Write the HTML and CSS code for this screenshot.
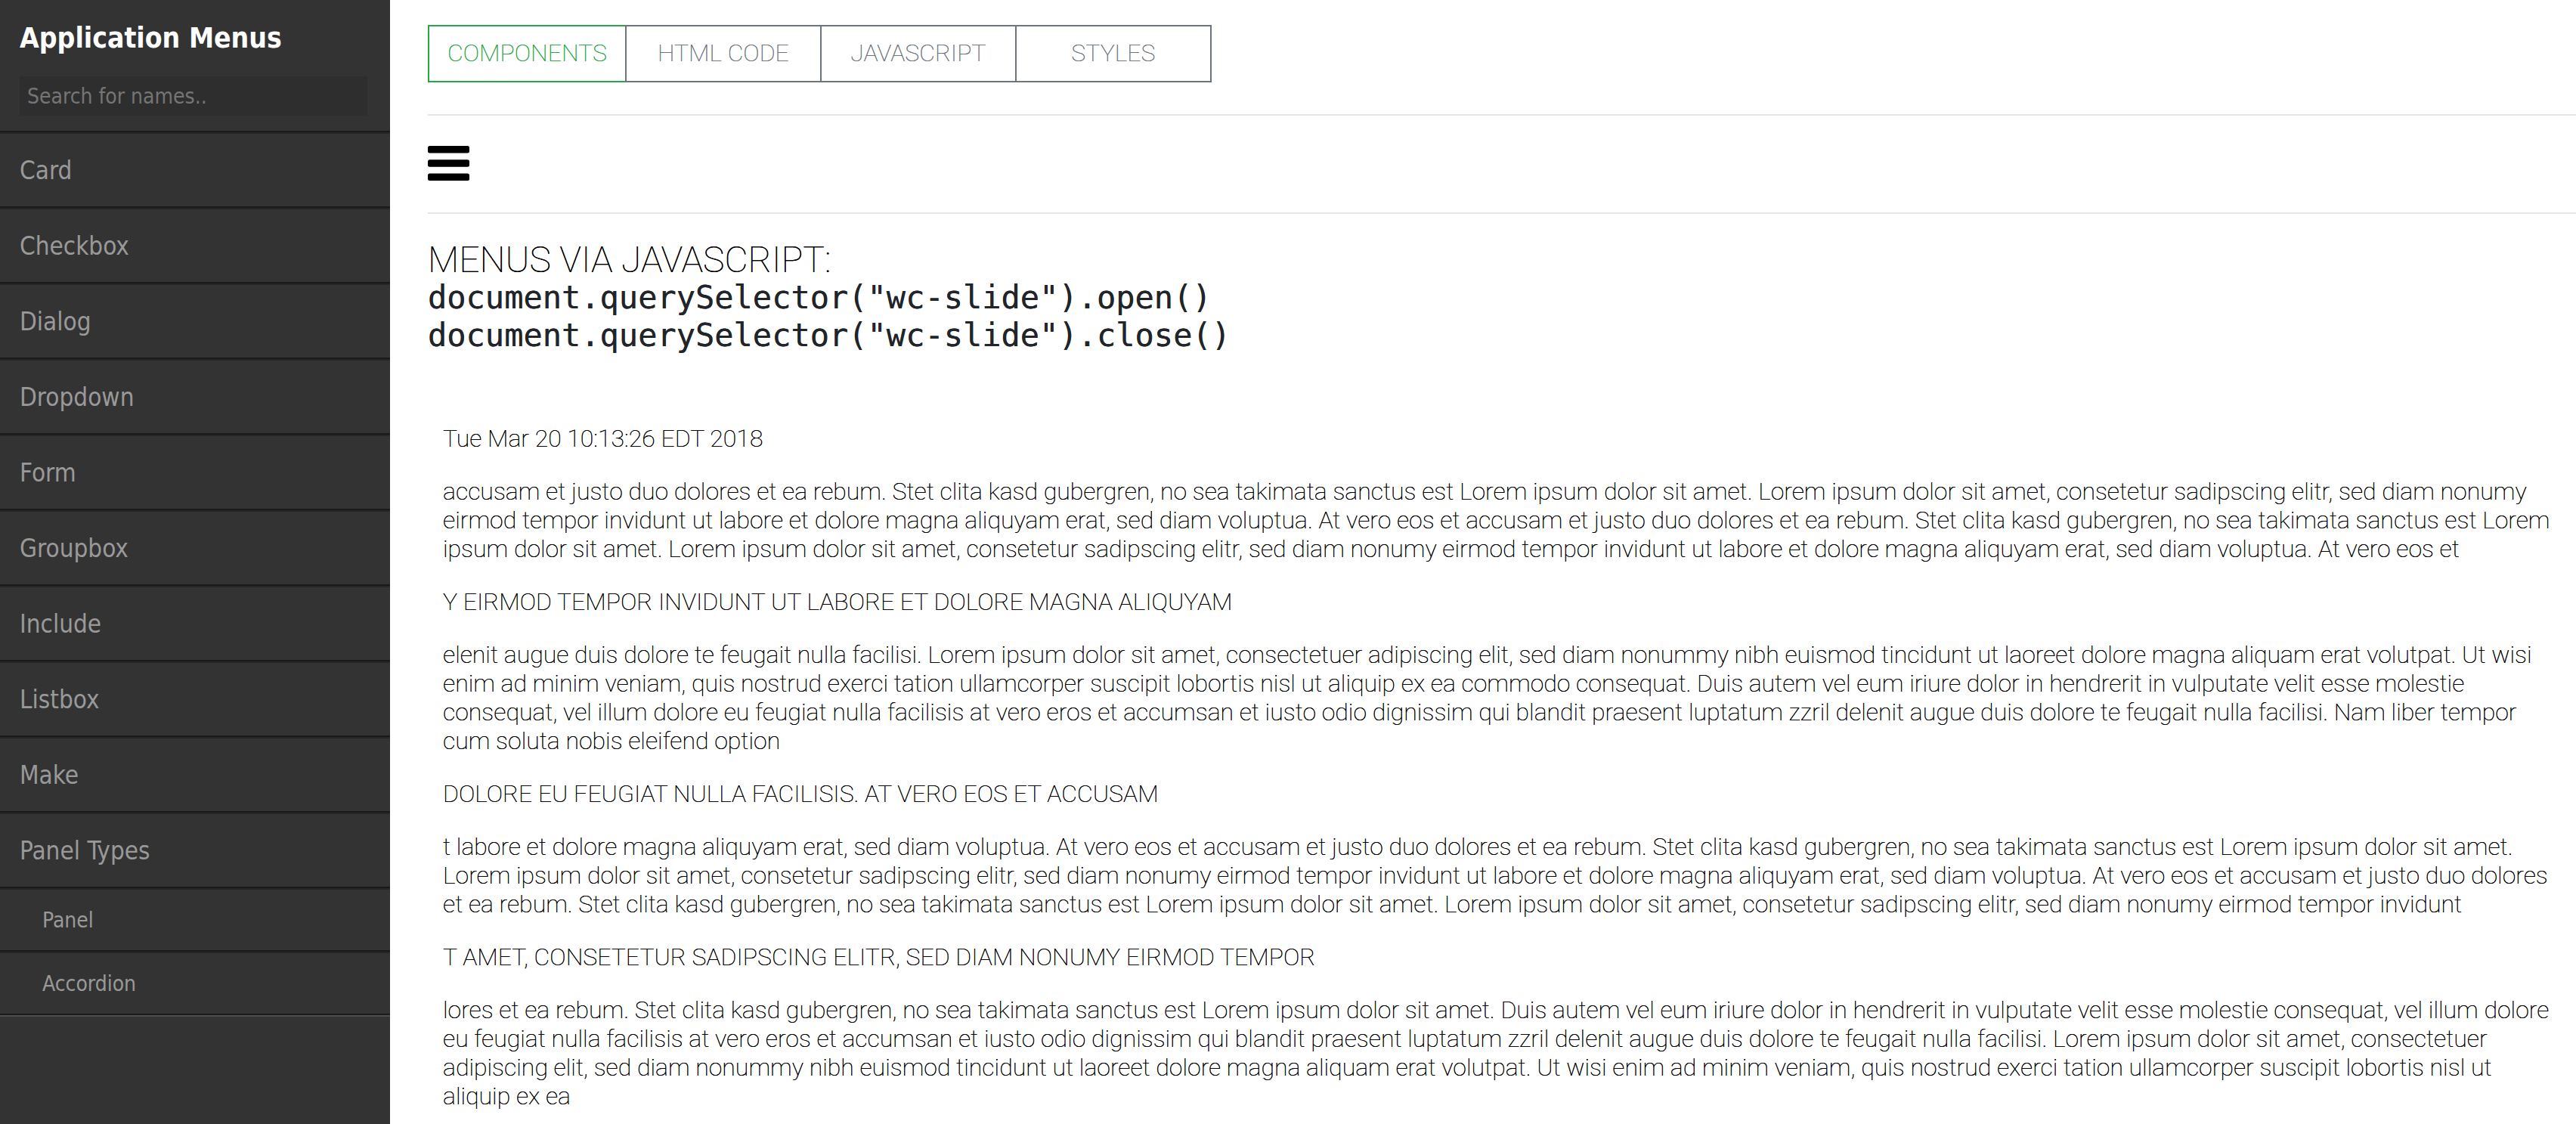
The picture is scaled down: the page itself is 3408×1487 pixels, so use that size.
FILE: index.html
```html
<!DOCTYPE html>
<html lang="en">
<head>
<meta charset="utf-8">
<meta name="viewport" content="width=device-width, initial-scale=1">
<title>Application Menus</title>
<link rel="stylesheet" href="styles.css">
</head>
<body>
<div class="app">
  <aside class="sidebar">
    <header class="sidebar-header">
      <h1 class="sidebar-title">Application Menus</h1>
      <input class="search" type="text" placeholder="Search for names.." aria-label="Search for names">
    </header>
    <nav>
      <ul class="menu">
        <li><a class="menu-link" href="#card">Card</a></li>
        <li><a class="menu-link" href="#checkbox">Checkbox</a></li>
        <li><a class="menu-link" href="#dialog">Dialog</a></li>
        <li><a class="menu-link" href="#dropdown">Dropdown</a></li>
        <li><a class="menu-link" href="#form">Form</a></li>
        <li><a class="menu-link" href="#groupbox">Groupbox</a></li>
        <li><a class="menu-link" href="#include">Include</a></li>
        <li><a class="menu-link" href="#listbox">Listbox</a></li>
        <li><a class="menu-link" href="#make">Make</a></li>
        <li>
          <a class="menu-link" href="#panel-types">Panel Types</a>
          <ul class="submenu">
            <li><a class="menu-link submenu-link" href="#panel">Panel</a></li>
            <li><a class="menu-link submenu-link" href="#accordion">Accordion</a></li>
          </ul>
        </li>
      </ul>
    </nav>
  </aside>

  <main class="content">
    <div class="tabs">
      <button class="tab tab-active" type="button">COMPONENTS</button>
      <button class="tab" type="button">HTML CODE</button>
      <button class="tab" type="button">JAVASCRIPT</button>
      <button class="tab" type="button">STYLES</button>
    </div>

    <div class="toolbar">
      <button class="menu-toggle" type="button" aria-label="Open menu">
        <svg class="menu-icon" viewBox="0 0 55 46" aria-hidden="true">
          <rect x="0" y="0" width="55" height="9.6" rx="2.5"/>
          <rect x="0" y="18.2" width="55" height="9.6" rx="2.5"/>
          <rect x="0" y="36.4" width="55" height="9.6" rx="2.5"/>
        </svg>
      </button>
    </div>

    <h2 class="heading">MENUS VIA JAVASCRIPT:
      <code>document.querySelector("wc-slide").open()</code>
      <code>document.querySelector("wc-slide").close()</code>
    </h2>

    <article class="article">
      <p>Tue Mar 20 10:13:26 EDT 2018</p>
      <p>accusam et justo duo dolores et ea rebum. Stet clita kasd gubergren, no sea takimata sanctus est Lorem ipsum dolor sit amet. Lorem ipsum dolor sit amet, consetetur sadipscing elitr, sed diam nonumy eirmod tempor invidunt ut labore et dolore magna aliquyam erat, sed diam voluptua. At vero eos et accusam et justo duo dolores et ea rebum. Stet clita kasd gubergren, no sea takimata sanctus est Lorem ipsum dolor sit amet. Lorem ipsum dolor sit amet, consetetur sadipscing elitr, sed diam nonumy eirmod tempor invidunt ut labore et dolore magna aliquyam erat, sed diam voluptua. At vero eos et</p>
      <p>Y EIRMOD TEMPOR INVIDUNT UT LABORE ET DOLORE MAGNA ALIQUYAM</p>
      <p>elenit augue duis dolore te feugait nulla facilisi. Lorem ipsum dolor sit amet, consectetuer adipiscing elit, sed diam nonummy nibh euismod tincidunt ut laoreet dolore magna aliquam erat volutpat. Ut wisi enim ad minim veniam, quis nostrud exerci tation ullamcorper suscipit lobortis nisl ut aliquip ex ea commodo consequat. Duis autem vel eum iriure dolor in hendrerit in vulputate velit esse molestie consequat, vel illum dolore eu feugiat nulla facilisis at vero eros et accumsan et iusto odio dignissim qui blandit praesent luptatum zzril delenit augue duis dolore te feugait nulla facilisi. Nam liber tempor cum soluta nobis eleifend option</p>
      <p>DOLORE EU FEUGIAT NULLA FACILISIS. AT VERO EOS ET ACCUSAM</p>
      <p>t labore et dolore magna aliquyam erat, sed diam voluptua. At vero eos et accusam et justo duo dolores et ea rebum. Stet clita kasd gubergren, no sea takimata sanctus est Lorem ipsum dolor sit amet. Lorem ipsum dolor sit amet, consetetur sadipscing elitr, sed diam nonumy eirmod tempor invidunt ut labore et dolore magna aliquyam erat, sed diam voluptua. At vero eos et accusam et justo duo dolores et ea rebum. Stet clita kasd gubergren, no sea takimata sanctus est Lorem ipsum dolor sit amet. Lorem ipsum dolor sit amet, consetetur sadipscing elitr, sed diam nonumy eirmod tempor invidunt</p>
      <p>T AMET, CONSETETUR SADIPSCING ELITR, SED DIAM NONUMY EIRMOD TEMPOR</p>
      <p>lores et ea rebum. Stet clita kasd gubergren, no sea takimata sanctus est Lorem ipsum dolor sit amet. Duis autem vel eum iriure dolor in hendrerit in vulputate velit esse molestie consequat, vel illum dolore eu feugiat nulla facilisis at vero eros et accumsan et iusto odio dignissim qui blandit praesent luptatum zzril delenit augue duis dolore te feugait nulla facilisi. Lorem ipsum dolor sit amet, consectetuer adipiscing elit, sed diam nonummy nibh euismod tincidunt ut laoreet dolore magna aliquam erat volutpat. Ut wisi enim ad minim veniam, quis nostrud exerci tation ullamcorper suscipit lobortis nisl ut aliquip ex ea</p>
    </article>
  </main>
</div>
</body>
</html>
```
FILE: styles.css
```css
* {
  box-sizing: border-box;
}

body {
  margin: 0;
  background: #fff;
  color: #000;
  font-family: Roboto, sans-serif;
  font-size: 32px;
  font-weight: 100;
  line-height: 38px;
}

.app {
  display: flex;
  min-height: 100vh;
}

/* Sidebar */

.sidebar {
  flex: 0 0 516px;
  background: #333;
  color: #999;
  font-family: "DejaVu Sans Condensed", "DejaVu Sans", sans-serif;
  font-weight: 400;
}

.sidebar-header {
  display: flex;
  flex-direction: column;
  gap: 24px;
  padding: 24px 30px 20px 26px;
  border-bottom: 2px solid #1a1a1a;
}

.sidebar-title {
  margin: 0;
  color: #fff;
  font-size: 37px;
  font-weight: 700;
  line-height: 53px;
}

.search {
  width: 100%;
  height: 52px;
  padding: 0 10px;
  border: 0;
  background: #2e2e2e;
  color: #999;
  font-family: inherit;
  font-size: 28px;
}

.search::placeholder {
  color: #757575;
}

.menu,
.submenu {
  margin: 0;
  padding: 0;
  list-style: none;
}

.menu {
  border-bottom: 2px solid #4d4d4d;
}

.menu-link {
  display: block;
  padding: 2px 26px 0;
  border-top: 2px solid #262626;
  border-bottom: 2px solid #1a1a1a;
  color: #999;
  font-size: 33px;
  line-height: 94px;
  text-decoration: none;
}

.submenu-link {
  padding-left: 56px;
  font-size: 28px;
  line-height: 78px;
}

/* Content */

.content {
  flex: 1;
  min-width: 0;
  padding: 33px 0 0 50px;
}

.tabs {
  display: flex;
  padding-bottom: 42px;
  border-bottom: 2px solid #e6e6e6;
}

.tab {
  min-width: 260px;
  padding: 12px 24px 14px;
  border: 2px solid #6c757d;
  background: transparent;
  color: #6c757d;
  font: 100 32px/46px Roboto, sans-serif;
}

.tab + .tab {
  margin-left: -2px;
}

.tab-active {
  border-color: #28a745;
  color: #28a745;
}

/* Hairline type gets a second pass of ink so it stays readable. */
.tab,
.heading,
.article {
  text-shadow: 0 0 0 currentColor;
}

.toolbar {
  display: flex;
  padding: 40px 0 42px;
  border-bottom: 2px solid #e6e6e6;
}

.menu-toggle {
  display: flex;
  padding: 0;
  border: 0;
  background: transparent;
}

.menu-icon {
  width: 55px;
  height: 46px;
}

.heading {
  margin: 36px 0 0;
  font-size: 48px;
  font-weight: 100;
  line-height: 50px;
}

.heading code {
  display: block;
  color: #212529;
  font-family: "DejaVu Sans Mono", monospace;
  font-size: 42px;
  font-weight: 400;
}

.article {
  margin-top: 92px;
  padding: 0 32px 0 20px;
}

.article p {
  margin: 0;
}

.article p + p {
  margin-top: 32px;
}
```
